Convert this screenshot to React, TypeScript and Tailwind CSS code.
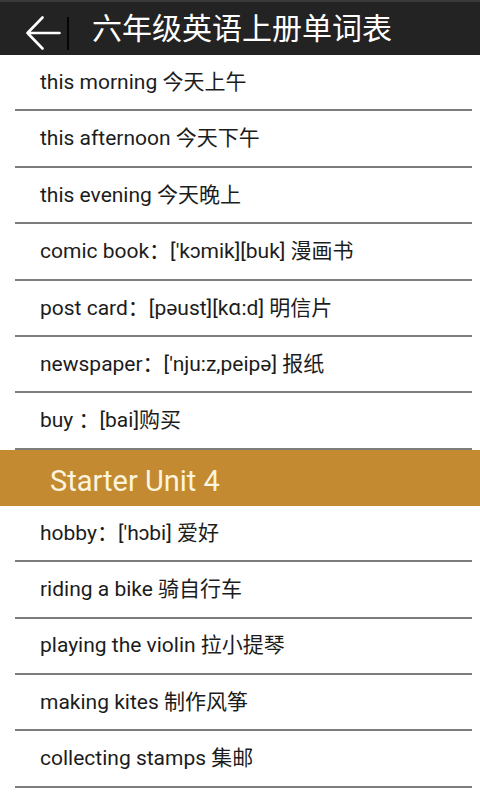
import React from "react";

const FONT = { fontFamily: "Roboto, 'Noto Sans CJK SC', sans-serif" };

const topWords = [
  "this morning 今天上午",
  "this afternoon 今天下午",
  "this evening 今天晚上",
  "comic book：['kɔmik][buk] 漫画书",
  "post card：[pəust][kɑ:d] 明信片",
  "newspaper：['nju:z,peipə] 报纸",
  "buy ：[bai]购买",
];

const unit4Words = [
  "hobby：['hɔbi] 爱好",
  "riding a bike 骑自行车",
  "playing the violin 拉小提琴",
  "making kites 制作风筝",
  "collecting stamps 集邮",
];

function WordRow({ text }: { text: string }) {
  return (
    <div className="flex flex-col">
      <div className="flex h-[54.4px] items-center pl-[40px] pt-[1px] text-[21px] text-[#1c1c1c]">
        {text}
      </div>
      <div className="ml-[15px] mr-[8px] h-[2px] bg-[#7d7d7d]" />
    </div>
  );
}

export default function App() {
  return (
    <div className="flex h-[800px] w-[480px] flex-col overflow-hidden bg-white" style={FONT}>
      {/* Header */}
      <div className="flex h-[55px] items-center border-t-[2px] border-[#3a3a3a] bg-[#232323]">
        <button className="mt-[9px] flex h-[34px] w-[67px] items-center pl-[26px]" aria-label="返回">
          <svg width="35" height="34" viewBox="0 0 35 34" fill="none">
            <path
              d="M33.5 17H1.5M16.5 1.5L1.5 17l15 15.5"
              stroke="#ffffff"
              strokeWidth="2.6"
              strokeLinecap="round"
              strokeLinejoin="round"
            />
          </svg>
        </button>
        <div className="mt-[9px] h-[33px] w-[2px] bg-[#050505]" />
        <h1 className="pl-[23px] text-[30px] leading-none text-white">
          六年级英语上册单词表
        </h1>
      </div>

      {/* List */}
      <div className="flex flex-col">
        {topWords.map((w) => (
          <WordRow key={w} text={w} />
        ))}
        <div className="flex h-[56px] items-center bg-[#c38a31] pl-[50px] pt-[8px] text-[29px] text-[#fbf4de]">
          Starter Unit 4
        </div>
        {unit4Words.map((w) => (
          <WordRow key={w} text={w} />
        ))}
      </div>
    </div>
  );
}
